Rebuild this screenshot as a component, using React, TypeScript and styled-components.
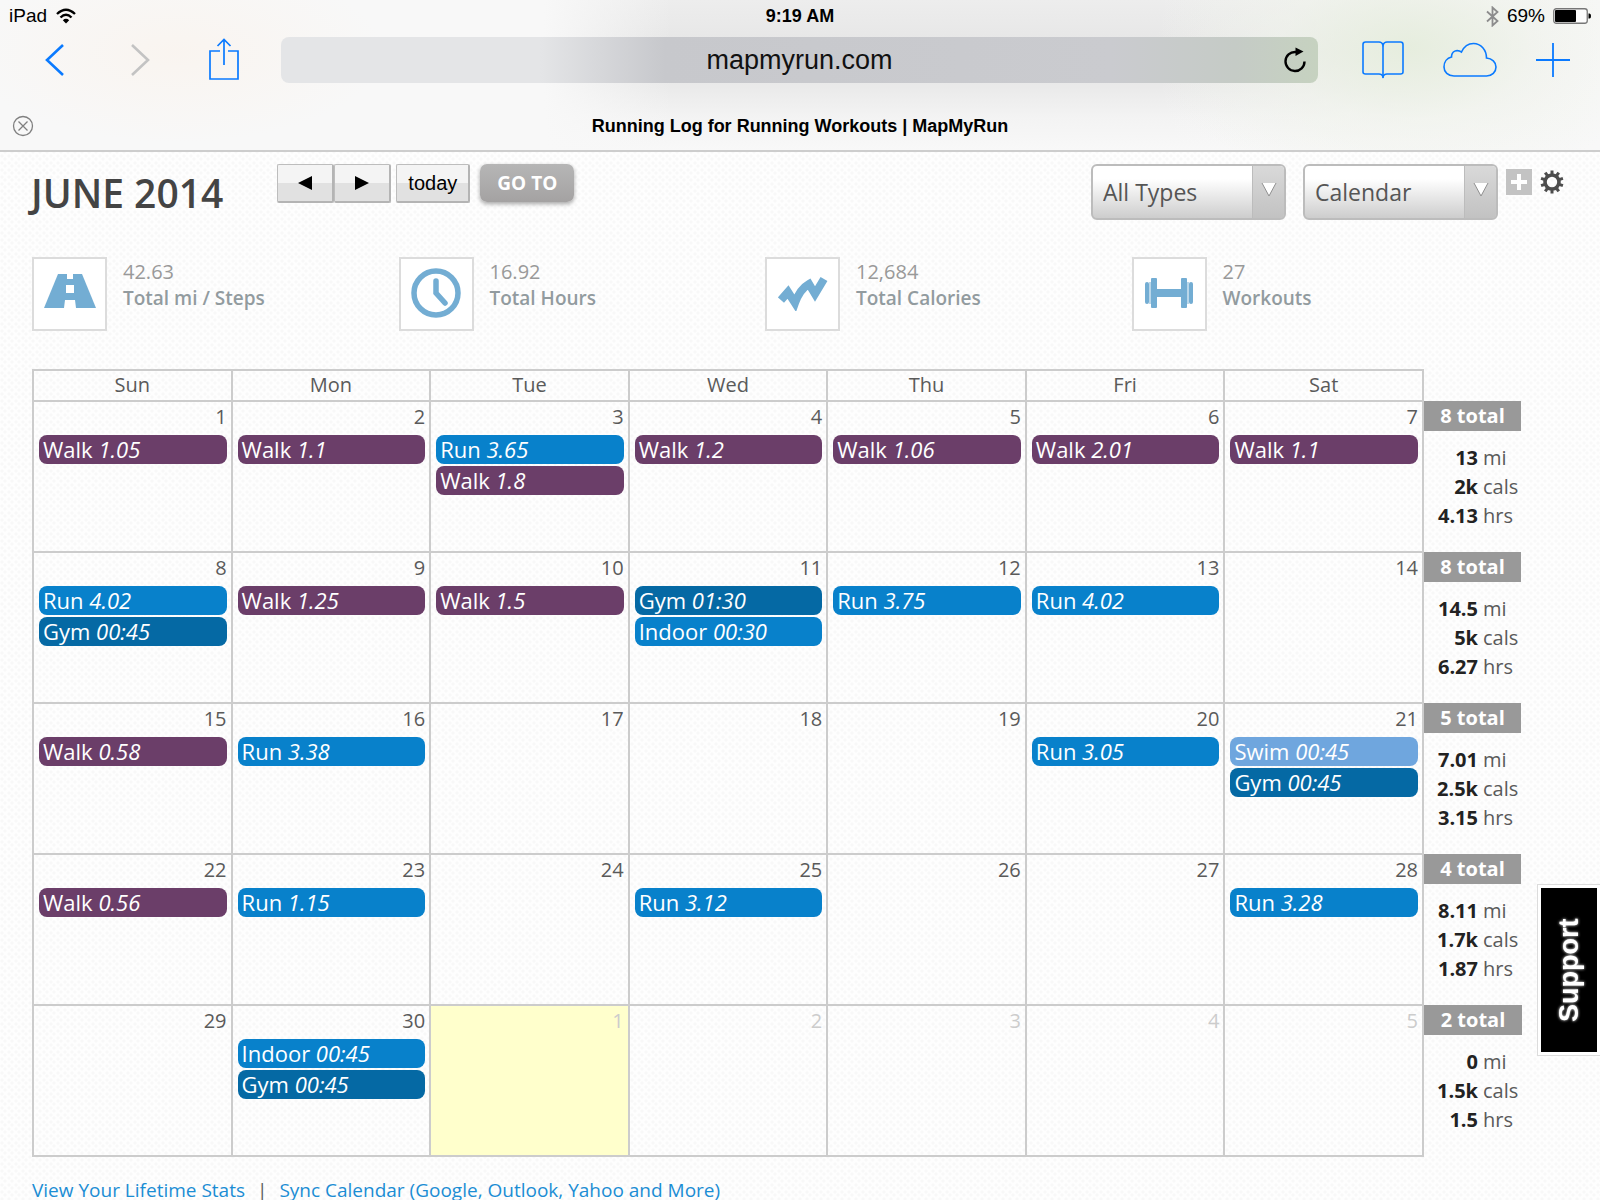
import React from "react";
import styled, { createGlobalStyle } from "styled-components";

const sans = `"Open Sans", "Noto Sans", sans-serif`;
const system = `"Liberation Sans", Arial, sans-serif`;
const line = "#cccccc";
const blue = "#0a7aff";

const Global = createGlobalStyle`
  *, *::before, *::after { box-sizing: border-box; }
  body { margin: 0; background: #fdfdfd; }
  button, select, input { font: inherit; }
`;

const Page = styled.div`
  min-height: 100vh;
  font-family: ${sans};
  font-size: 20px;
  line-height: 26px;
  color: #5a5a5a;
  background-color: #fefefe;
  background-image:
    radial-gradient(circle at 2px 2px, #f8f8f8 1px, transparent 2px),
    radial-gradient(circle at 5px 5px, #f8f8f8 1px, transparent 2px);
  background-size: 7px 7px;
`;

/* ---------- browser chrome ---------- */

const Chrome = styled.header`
  font-family: ${system};
  color: #000;
  border-bottom: 2px solid #cdcdcd;
  background:
    radial-gradient(ellipse 13% 60% at 11% 35%, rgba(250, 242, 234, 0.6), transparent),
    radial-gradient(ellipse 16% 95% at 88% 32%, rgba(229, 237, 220, 0.9), rgba(238, 242, 232, 0.5) 50%, transparent),
    linear-gradient(90deg, #f8f8f8 34%, rgba(248, 248, 248, 0) 42%, rgba(248, 248, 248, 0) 72%, #f8f8f8 100%),
    linear-gradient(180deg, #ededed 0, #e5e5e5 35%, #eaeaea 58%, #f3f3f3 78%, #f8f8f8 100%);
`;

const StatusBar = styled.div`
  display: grid;
  grid-template-columns: 1fr auto 1fr;
  align-items: center;
  height: 32px;
  padding: 0 9px;
  font-size: 19px;
  line-height: 24px;
`;

const StatusGroup = styled.div<{ $end?: boolean }>`
  display: flex;
  align-items: center;
  gap: ${(p) => (p.$end ? 8 : 9)}px;
  justify-content: ${(p) => (p.$end ? "flex-end" : "flex-start")};
`;

const Clock = styled.div`
  font-size: 18px;
  font-weight: 700;
`;

const Toolbar = styled.div`
  display: flex;
  align-items: center;
  height: 56px;
  padding: 0 30px 0 38px;
`;

const ToolGroup = styled.div<{ $gap: number }>`
  display: flex;
  align-items: center;
  gap: ${(p) => p.$gap}px;
`;

const IconButton = styled.button`
  display: flex;
  align-items: center;
  justify-content: center;
  padding: 0;
  border: 0;
  background: none;
  color: inherit;
  cursor: pointer;
`;

const AddressBar = styled.form`
  flex: 1;
  display: grid;
  grid-template-columns: 46px 1fr 46px;
  align-items: center;
  height: 46px;
  margin: 0 44px 0 41px;
  border-radius: 8px;
  background: linear-gradient(90deg, #e4e5e7 25%, #c7c8cc 37%, #cacbcf 80%, #c5cbc6 92%, #c6d2c0 100%);
`;

const AddressInput = styled.input`
  grid-column: 2;
  width: 100%;
  padding: 0;
  border: 0;
  outline: 0;
  background: none;
  color: #111;
  font-size: 27px;
  line-height: 34px;
  text-align: center;
`;

const TabStrip = styled.div`
  display: grid;
  grid-template-columns: 24px 1fr 24px;
  align-items: center;
  height: 62px;
  padding: 14px 11px 0;
`;

const TabTitle = styled.div`
  text-align: center;
  font-size: 18px;
  line-height: 24px;
  font-weight: 700;
`;

/* ---------- workout log ---------- */

const Main = styled.main`
  padding: 12px 77px 0 32px;
`;

const LogHeader = styled.div`
  display: flex;
  align-items: flex-start;
  margin-right: -41px;
`;

const Title = styled.h1`
  margin: 0 54px 0 -1px;
  padding-top: 2px;
  font-size: 39px;
  line-height: 54px;
  font-weight: 600;
  color: #444;
`;

const NavButton = styled.button<{ $width: number }>`
  display: flex;
  align-items: center;
  justify-content: center;
  width: ${(p) => p.$width}px;
  height: 39px;
  padding: 0;
  border: 1px solid #bdbdbd;
  border-bottom: 2px solid #b4b4b4;
  border-right: 2px solid #b4b4b4;
  border-radius: 2px;
  background: linear-gradient(180deg, #f4f4f4 50%, #e1e1e1 50%);
  color: #000;
  font-family: ${system};
  font-size: 20px;
  cursor: pointer;
`;

const NavGroup = styled.div`
  display: flex;
  margin-right: 5px;
`;

const GoToButton = styled.button`
  width: 94px;
  height: 38px;
  margin-left: 10px;
  padding: 0;
  border: 0;
  border-radius: 7px;
  background: linear-gradient(180deg, #b6b6b6, #a4a2a2);
  box-shadow: 0 2px 4px rgba(0, 0, 0, 0.35);
  color: #fff;
  font-size: 19px;
  font-weight: 700;
  cursor: pointer;
`;

const Filters = styled.div`
  display: flex;
  gap: 17px;
  margin-left: auto;
  margin-right: 8px;
`;

const SelectBox = styled.div`
  display: grid;
  grid-template-columns: 1fr 32px;
  width: 195px;
  height: 56px;
  border: 2px solid #bcbcbc;
  border-radius: 6px;
  background: linear-gradient(180deg, #fff 25%, #cdcdcd);
  overflow: hidden;
`;

const Select = styled.select`
  grid-area: 1 / 1 / 2 / 3;
  width: 100%;
  padding: 0 34px 0 10px;
  border: 0;
  outline: 0;
  appearance: none;
  background: none;
  color: #555;
  font-size: 23px;
  line-height: 32px;
`;

const SelectArrow = styled.span`
  grid-area: 1 / 2 / 2 / 3;
  display: flex;
  justify-content: center;
  align-items: flex-start;
  padding-top: 16px;
  border-left: 1px solid #bcbcbc;
  background: linear-gradient(180deg, #d9d9d9, #c2c2c2);
  pointer-events: none;
`;

const Tools = styled.div`
  display: flex;
  align-items: center;
  gap: 8px;
  padding-top: 5px;
`;

const Stats = styled.section`
  display: grid;
  grid-template-columns: repeat(4, 1fr);
  margin: 37px 25px 38px 0;
`;

const Stat = styled.div`
  display: flex;
  gap: 16px;
  color: #999;
`;

const StatIcon = styled.div`
  display: flex;
  align-items: center;
  justify-content: center;
  width: 75px;
  height: 74px;
  padding-bottom: 2px;
  border: 2px solid #dcdcdc;
  background: #fff;
`;

const StatText = styled.div`
  padding-top: 2px;
`;

const StatLabel = styled.div`
  font-size: 19px;
  font-weight: 600;
  color: #929b9f;
`;

/* ---------- calendar ---------- */

const Calendar = styled.table`
  width: 100%;
  table-layout: fixed;
  border-collapse: collapse;
`;

const SummaryCol = styled.col`
  width: 99px;
`;

const DayHead = styled.th`
  height: 31px;
  padding: 0 0 1px;
  border: 2px solid ${line};
  font-weight: 400;
`;

const DayCell = styled.td<{ $today?: boolean; $other?: boolean }>`
  height: 151px;
  padding: 2px 4px 0 5px;
  border: 2px solid ${line};
  vertical-align: top;
  background: ${(p) => (p.$today ? "#ffffcc" : "transparent")};
  color: ${(p) => (p.$other ? "#cccccc" : "inherit")};
`;

const DayNumber = styled.div`
  padding-bottom: 5px;
  text-align: right;
`;

const workoutColor = {
  Walk: "#6b3e69",
  Run: "#0881cb",
  Indoor: "#0881cb",
  Gym: "#0569a4",
  Swim: "#6fa6de",
};

type Kind = keyof typeof workoutColor;

const Workout = styled.a<{ $kind: Kind }>`
  display: block;
  height: 29px;
  margin-bottom: 2px;
  padding-left: 4px;
  border-radius: 8px;
  background: ${(p) => workoutColor[p.$kind]};
  color: #fff;
  font-size: 22px;
  font-weight: 500;
  line-height: 28px;
  text-decoration: none;
  white-space: nowrap;
`;

const SummaryCell = styled.td`
  padding: 0;
  vertical-align: top;
`;

const Total = styled.div`
  height: 30px;
  background: #999;
  color: #fff;
  font-weight: 700;
  line-height: 30px;
  text-align: center;
`;

const Sums = styled.dl`
  display: grid;
  grid-template-columns: 54px 1fr;
  column-gap: 5px;
  margin: 12px 0 0;
  line-height: 29px;
`;

const Amount = styled.dd`
  margin: 0;
  text-align: right;
  font-weight: 700;
  color: #222;
`;

const Unit = styled.dt`
  grid-column: 2;
`;

const Footer = styled.footer`
  display: flex;
  gap: 12px;
  padding-top: 20px;
  font-size: 19px;
`;

const FooterLink = styled.a`
  color: #1b8dd4;
  text-decoration: none;
`;

const SupportTab = styled.button`
  position: fixed;
  top: 885px;
  right: 0;
  width: 62px;
  height: 170px;
  padding: 0;
  border: 3px solid #fff;
  outline: 1px solid #dcdcdc;
  background: #000;
  color: #fff;
  font-family: ${system};
  font-size: 27px;
  font-weight: 700;
  line-height: 50px;
  text-shadow: 0 0 3px #fff;
  writing-mode: vertical-rl;
  transform: rotate(180deg);
  cursor: pointer;
`;

/* ---------- data ---------- */

type Entry = [Kind, string];
interface Week {
  days: number[];
  workouts: Record<number, Entry[]>;
  total: number;
  sums: [string, string, string];
}

const weeks: Week[] = [
  {
    days: [1, 2, 3, 4, 5, 6, 7],
    workouts: {
      1: [["Walk", "1.05"]],
      2: [["Walk", "1.1"]],
      3: [["Run", "3.65"], ["Walk", "1.8"]],
      4: [["Walk", "1.2"]],
      5: [["Walk", "1.06"]],
      6: [["Walk", "2.01"]],
      7: [["Walk", "1.1"]],
    },
    total: 8,
    sums: ["13", "2k", "4.13"],
  },
  {
    days: [8, 9, 10, 11, 12, 13, 14],
    workouts: {
      8: [["Run", "4.02"], ["Gym", "00:45"]],
      9: [["Walk", "1.25"]],
      10: [["Walk", "1.5"]],
      11: [["Gym", "01:30"], ["Indoor", "00:30"]],
      12: [["Run", "3.75"]],
      13: [["Run", "4.02"]],
    },
    total: 8,
    sums: ["14.5", "5k", "6.27"],
  },
  {
    days: [15, 16, 17, 18, 19, 20, 21],
    workouts: {
      15: [["Walk", "0.58"]],
      16: [["Run", "3.38"]],
      20: [["Run", "3.05"]],
      21: [["Swim", "00:45"], ["Gym", "00:45"]],
    },
    total: 5,
    sums: ["7.01", "2.5k", "3.15"],
  },
  {
    days: [22, 23, 24, 25, 26, 27, 28],
    workouts: {
      22: [["Walk", "0.56"]],
      23: [["Run", "1.15"]],
      25: [["Run", "3.12"]],
      28: [["Run", "3.28"]],
    },
    total: 4,
    sums: ["8.11", "1.7k", "1.87"],
  },
  {
    days: [29, 30, 1, 2, 3, 4, 5],
    workouts: { 30: [["Indoor", "00:45"], ["Gym", "00:45"]] },
    total: 2,
    sums: ["0", "1.5k", "1.5"],
  },
];

const units = ["mi", "cals", "hrs"];
const dayNames = ["Sun", "Mon", "Tue", "Wed", "Thu", "Fri", "Sat"];

/* ---------- icons ---------- */

const statBlue = "#73add3";

const RoadIcon = () => (
  <svg width="52" height="38" viewBox="0 0 52 38">
    <path d="M14 0h24l14 34H0z" fill={statBlue} />
    <path d="M23 0h6v5h-6zM22 11h8v8h-8zM21 26h10l1 8H20z" fill="#fff" />
  </svg>
);

const ClockIcon = () => (
  <svg width="50" height="50" viewBox="0 0 50 50" fill="none" stroke={statBlue}>
    <circle cx="25" cy="25" r="22" strokeWidth="5.500" />
    <path d="M25 13v12l9 10" strokeWidth="5.500" strokeLinecap="round" />
  </svg>
);

const TrendIcon = () => (
  <svg width="50" height="36" viewBox="0 0 50 36" fill="none" stroke={statBlue} strokeWidth="8">
    <path d="M3 25L10 17L17 28Q22 14 31 9L37 19L46 4" />
  </svg>
);

const DumbbellIcon = () => (
  <svg width="48" height="32" viewBox="0 0 48 32" fill={statBlue}>
    <rect x="6" y="1" width="6" height="30" rx="1" />
    <rect x="36" y="1" width="6" height="30" rx="1" />
    <rect y="5" width="4" height="22" rx="2" />
    <rect x="44" y="5" width="4" height="22" rx="2" />
    <rect x="4" y="5" width="2" height="22" opacity="0.5" />
    <rect x="42" y="5" width="2" height="22" opacity="0.5" />
    <rect x="12" y="12" width="24" height="8" />
  </svg>
);

const stats = [
  { icon: <RoadIcon />, value: "42.63", label: "Total mi / Steps" },
  { icon: <ClockIcon />, value: "16.92", label: "Total Hours" },
  { icon: <TrendIcon />, value: "12,684", label: "Total Calories" },
  { icon: <DumbbellIcon />, value: "27", label: "Workouts" },
];

const WifiIcon = () => (
  <svg width="20" height="16" viewBox="0 0 20 16" fill="none" stroke="#000" strokeWidth="2.4">
    <path d="M1 6Q10 -2.500 19 6" />
    <path d="M4.500 9.500Q10 4 15.500 9.500" />
    <path d="M10 15.500L6.800 12.200Q10 9.500 13.200 12.200z" fill="#000" stroke="none" />
  </svg>
);

const BluetoothIcon = () => (
  <svg width="13" height="21" viewBox="0 0 13 21" fill="none" stroke="#8c8c8c" strokeWidth="1.800">
    <path d="M1 5.500L11.500 15L6.500 19.500V1.500L11.500 6L1 15.500" />
  </svg>
);

const BatteryIcon = () => (
  <svg width="38" height="16" viewBox="0 0 38 16">
    <rect x="0.750" y="0.750" width="33.500" height="14.500" rx="2.500" fill="#fdfdfd" stroke="#777" strokeWidth="1.300" />
    <rect x="2" y="2" width="21" height="12" rx="1" fill="#000" />
    <path d="M35.500 5.500h1q1.500 0 1.500 2.500t-1.500 2.500h-1z" fill="#000" />
  </svg>
);

const Chevron = ({ forward }: { forward?: boolean }) => (
  <svg width="34" height="34" viewBox="0 0 34 34" fill="none" stroke={forward ? "#c3c3c3" : blue} strokeWidth="2.6">
    <path d={forward ? "M9 2L25 17L9 32" : "M25 2L9 17L25 32"} />
  </svg>
);

const ShareIcon = () => (
  <svg width="32" height="46" viewBox="0 0 32 46" fill="none" stroke={blue} strokeWidth="1.700">
    <path d="M12 14H2v28h28V14H20" />
    <path d="M16 28V3M9.500 9L16 2.500L22.500 9" />
  </svg>
);

const ReloadIcon = () => (
  <svg width="24" height="28" viewBox="0 0 24 28" fill="none" stroke="#000" strokeWidth="2.400">
    <path d="M21.500 15.500A9.500 9.500 0 1 1 12.500 6H15" />
    <path d="M12.500 1.500L20.500 5.500L12.500 10z" fill="#000" stroke="none" />
  </svg>
);

const BookIcon = () => (
  <svg width="42" height="38" viewBox="0 0 42 38" fill="none" stroke={blue} strokeWidth="1.600">
    <path d="M21 4Q20 1 17 1H3.500Q1 1 1 3.500V31Q1 33 3.500 33H17Q20 33 21 35.500Q22 33 25 33H38.500Q41 33 41 31V3.500Q41 1 38.500 1H25Q22 1 21 4z" />
    <path d="M21 4V37" />
  </svg>
);

const CloudIcon = () => (
  <svg width="54" height="36" viewBox="0 0 54 36" fill="none" stroke={blue} strokeWidth="1.600">
    <path d="M11 34C5 34 1 30 1 25C1 20 4 16 8.500 15C8.500 9 14 7 18.500 10C21 4.500 25.500 1.500 30.500 1.500C38 1.500 43.500 8 43.500 16C49 16.500 53 20 53 25C53 30 49 34 43.500 34z" />
  </svg>
);

const PlusIcon = () => (
  <svg width="34" height="34" viewBox="0 0 34 34" stroke={blue} strokeWidth="1.800">
    <path d="M17 0V34M0 17H34" />
  </svg>
);

const CloseTabIcon = () => (
  <svg width="22" height="22" viewBox="0 0 22 22" fill="none" stroke="#808080" strokeWidth="1.300">
    <circle cx="11" cy="11" r="9.500" />
    <path d="M6.500 6.500L15.500 15.500M15.500 6.500L6.500 15.500" />
  </svg>
);

const Triangle = ({ left }: { left?: boolean }) => (
  <svg width="14" height="14" viewBox="0 0 14 14">
    <path d={left ? "M14 0V14L0 7z" : "M0 0V14L14 7z"} fill="#000" />
  </svg>
);

const DropArrow = () => (
  <svg width="16" height="16" viewBox="0 0 16 16">
    <path d="M1 1H15L8 14z" fill="#fff" />
    <path d="M15 1L8 14L1 1" fill="none" stroke="#8f8f8f" strokeWidth="1" />
  </svg>
);

const AddIcon = () => (
  <svg width="26" height="26" viewBox="0 0 26 26">
    <rect width="26" height="26" fill="#c3c3c3" />
    <path d="M13 5V21M5 13H21" stroke="#fff" strokeWidth="4" />
  </svg>
);

const GearIcon = () => (
  <svg width="24" height="24" viewBox="0 0 24 24" fill="none" stroke="#4d4d4d">
    <circle cx="12" cy="12" r="7" strokeWidth="3.600" />
    {Array.from({ length: 10 }, (_, i) => (
      <path key={i} d="M12 4.500V0.500" strokeWidth="3" transform={`rotate(${i * 36} 12 12)`} />
    ))}
  </svg>
);

const Picker = ({ label, options }: { label: string; options: string[] }) => (
  <SelectBox>
    <Select aria-label={label}>
      {options.map((o) => (
        <option key={o}>{o}</option>
      ))}
    </Select>
    <SelectArrow>
      <DropArrow />
    </SelectArrow>
  </SelectBox>
);

export default function App() {
  return (
    <Page>
      <Global />
      <Chrome>
        <StatusBar>
          <StatusGroup>
            <span>iPad</span>
            <WifiIcon />
          </StatusGroup>
          <Clock>9:19 AM</Clock>
          <StatusGroup $end>
            <BluetoothIcon />
            <span>69%</span>
            <BatteryIcon />
          </StatusGroup>
        </StatusBar>
        <Toolbar>
          <ToolGroup $gap={51}>
            <IconButton aria-label="Back"><Chevron /></IconButton>
            <IconButton aria-label="Forward"><Chevron forward /></IconButton>
            <IconButton aria-label="Share"><ShareIcon /></IconButton>
          </ToolGroup>
          <AddressBar onSubmit={(e) => e.preventDefault()}>
            <AddressInput aria-label="Address" defaultValue="mapmyrun.com" />
            <IconButton type="button" aria-label="Reload"><ReloadIcon /></IconButton>
          </AddressBar>
          <ToolGroup $gap={39}>
            <IconButton aria-label="Bookmarks"><BookIcon /></IconButton>
            <IconButton aria-label="iCloud tabs"><CloudIcon /></IconButton>
            <IconButton aria-label="New tab"><PlusIcon /></IconButton>
          </ToolGroup>
        </Toolbar>
        <TabStrip>
          <IconButton aria-label="Close tab"><CloseTabIcon /></IconButton>
          <TabTitle>Running Log for Running Workouts | MapMyRun</TabTitle>
        </TabStrip>
      </Chrome>

      <Main>
        <LogHeader>
          <Title>JUNE 2014</Title>
          <NavGroup>
            <NavButton $width={57} aria-label="Previous month"><Triangle left /></NavButton>
            <NavButton $width={57} aria-label="Next month"><Triangle /></NavButton>
          </NavGroup>
          <NavButton $width={74}>today</NavButton>
          <GoToButton>GO TO</GoToButton>
          <Filters>
            <Picker label="Workout type" options={["All Types", "Walk", "Run", "Gym", "Swim"]} />
            <Picker label="View" options={["Calendar", "List"]} />
          </Filters>
          <Tools>
            <IconButton aria-label="Add workout"><AddIcon /></IconButton>
            <IconButton aria-label="Settings"><GearIcon /></IconButton>
          </Tools>
        </LogHeader>

        <Stats>
          {stats.map((s) => (
            <Stat key={s.label}>
              <StatIcon>{s.icon}</StatIcon>
              <StatText>
                <div>{s.value}</div>
                <StatLabel>{s.label}</StatLabel>
              </StatText>
            </Stat>
          ))}
        </Stats>

        <Calendar>
          <colgroup>
            {dayNames.map((d) => (
              <col key={d} />
            ))}
            <SummaryCol />
          </colgroup>
          <thead>
            <tr>
              {dayNames.map((d) => (
                <DayHead key={d} scope="col">{d}</DayHead>
              ))}
            </tr>
          </thead>
          <tbody>
            {weeks.map((week, w) => (
              <tr key={w}>
                {week.days.map((day) => {
                  const other = w === weeks.length - 1 && day < 8;
                  return (
                    <DayCell key={day} $other={other} $today={other && day === 1}>
                      <DayNumber>{day}</DayNumber>
                      {(week.workouts[day] ?? []).map(([kind, amount]) => (
                        <Workout key={kind} href="#workout" $kind={kind}>
                          {kind} <em>{amount}</em>
                        </Workout>
                      ))}
                    </DayCell>
                  );
                })}
                <SummaryCell>
                  <Total>{week.total} total</Total>
                  <Sums>
                    {units.map((unit, i) => (
                      <React.Fragment key={unit}>
                        <Amount>{week.sums[i]}</Amount>
                        <Unit>{unit}</Unit>
                      </React.Fragment>
                    ))}
                  </Sums>
                </SummaryCell>
              </tr>
            ))}
          </tbody>
        </Calendar>

        <Footer>
          <FooterLink href="#stats">View Your Lifetime Stats</FooterLink>
          <span>|</span>
          <FooterLink href="#sync">Sync Calendar (Google, Outlook, Yahoo and More)</FooterLink>
        </Footer>
      </Main>
      <SupportTab>Support</SupportTab>
    </Page>
  );
}
